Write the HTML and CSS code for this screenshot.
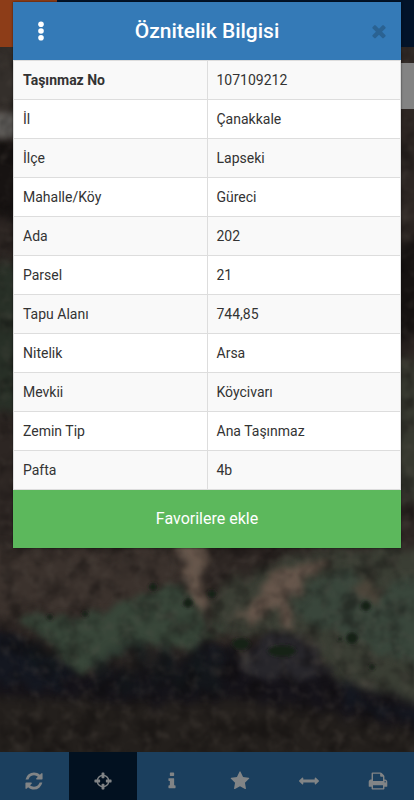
FILE: index.html
```html
<!DOCTYPE html>
<html lang="tr">
<head>
<meta charset="utf-8">
<meta name="viewport" content="width=device-width, initial-scale=1">
<title>Öznitelik Bilgisi</title>
<link rel="stylesheet" href="styles.css">
</head>
<body>
<header class="topbar"><div class="brand"></div></header>

<main class="map">
  <svg class="terrain" viewBox="0 47 414 706" preserveAspectRatio="xMidYMax slice" aria-hidden="true">
    <defs>
      <filter id="soft" x="-20%" y="-20%" width="140%" height="140%" color-interpolation-filters="sRGB">
        <feTurbulence type="fractalNoise" baseFrequency="0.07" numOctaves="4" seed="4" result="n"/>
        <feDisplacementMap in="SourceGraphic" in2="n" scale="22" xChannelSelector="R" yChannelSelector="G"/>
        <feGaussianBlur stdDeviation="3"/>
      </filter>
      <filter id="spot" x="-20%" y="-20%" width="140%" height="140%">
        <feGaussianBlur stdDeviation="1.500"/>
      </filter>
      <filter id="haze" x="-20%" y="-20%" width="140%" height="140%" color-interpolation-filters="sRGB">
        <feTurbulence type="fractalNoise" baseFrequency="0.1 0.03" numOctaves="3" seed="9" result="n"/>
        <feDisplacementMap in="SourceGraphic" in2="n" scale="26" xChannelSelector="R" yChannelSelector="G"/>
        <feGaussianBlur stdDeviation="5"/>
      </filter>
      <filter id="grain" x="0" y="0" width="100%" height="100%" color-interpolation-filters="sRGB">
        <feTurbulence type="fractalNoise" baseFrequency="0.05" numOctaves="4" seed="12"/>
        <feColorMatrix values="0 0 0 0 0.04  0 0 0 0 0.03  0 0 0 0 0.03  2.6 0 0 0 -1.1"/>
        <feGaussianBlur stdDeviation="1"/>
      </filter>
      <filter id="glint" x="0" y="0" width="100%" height="100%" color-interpolation-filters="sRGB">
        <feTurbulence type="fractalNoise" baseFrequency="0.09" numOctaves="4" seed="31"/>
        <feColorMatrix values="0 0 0 0 0.36  0 0 0 0 0.33  0 0 0 0 0.3  1.6 0 0 0 -0.75"/>
        <feGaussianBlur stdDeviation="1"/>
      </filter>
    </defs>
    <rect x="0" y="47" width="414" height="706" fill="#2d2623"/>
    <g filter="url(#haze)">
      <path fill="#342f2b" d="M-20 40H30V112H-20z"/>
      <path fill="#171312" d="M-20 142H30V222H-20zM390 240H434V340H390z"/>
      <path fill="#283027" d="M-20 265H30V415H-20z"/>
      <path fill="#373930" d="M390 360H434V505H390z"/>
      <path fill="#3b322d" d="M-20 550H180V600L100 620 20 612-20 620z"/>
      <path fill="#3a3e34" d="M205 600 300 550H434V720L350 690 300 640 215 636z"/>
      <path fill="#151319" d="M-20 628 20 636 50 660 90 674 150 668 220 650 300 656 350 686 434 708V780H-20z"/>
      <path fill="#231f1c" d="M-20 696 80 700 150 705 240 700 330 712 434 736V780H-20z"/>
    </g>
    <g filter="url(#soft)">
      <path fill="#5f5d5a" d="M-10 113H20V138H-10z"/>
      <path fill="#384639" d="M22 616 70 620 120 606 162 590 180 582 196 594 207 622 222 636 190 648 130 650 110 662 86 676 62 664 48 642 30 630z"/>
      <path fill="#39463b" d="M292 618 310 586 350 566 370 600 390 586 430 574V672L380 654 350 638z"/>
      <path fill="#66564b" d="M180 543H205L209 570 202 582 208 608 200 616 191 590 182 574zM234 620 262 594 268 574 300 562 328 566 306 582 288 602 298 630 286 634 278 608 252 624z"/>
      <path fill="#4c453a" d="M350 594 366 582 388 590 378 606z"/>
      <path fill="#27262b" d="M236 660 270 638 306 640 330 672 300 680 250 678z"/>
      <path fill="#181920" d="M194 654 214 644 230 654 226 672 200 674z"/>
      <path fill="#57514a" opacity=".7" d="M232 658 250 654 248 664zM358 678 372 684 372 692zM298 630 314 640 322 656z"/>
      <path fill="#141a25" opacity=".6" d="M-10 630 16 636 50 660 76 672 60 690-10 682zM338 680 370 704 424 710V724L350 706z"/>
    </g>
    <g filter="url(#haze)" opacity=".8" stroke="#12191c" stroke-width="7">
      <path d="M36 640V672M52 646V680M98 660V694M112 650V694M126 646V694M140 648V694M156 646V694M170 652V694M184 654V694M200 648V694M216 652V694"/>
    </g>
    <rect x="0" y="47" width="414" height="706" filter="url(#grain)" opacity=".4"/>
    <rect x="0" y="47" width="414" height="706" filter="url(#glint)" opacity=".4"/>
    <g fill="#192019" filter="url(#spot)">
      <circle cx="188" cy="604" r="5"/><circle cx="366" cy="607" r="5"/><circle cx="352" cy="639" r="6"/><ellipse cx="241" cy="645" rx="9" ry="6"/><circle cx="153" cy="588" r="4"/><circle cx="212" cy="595" r="4"/><circle cx="50" cy="618" r="3"/><circle cx="85" cy="615" r="3"/><circle cx="340" cy="640" r="2"/><circle cx="372" cy="668" r="3"/><ellipse cx="282" cy="652" rx="14" ry="6"/>
    </g>
  </svg>
  <div class="map-control"></div>
</main>

<nav class="toolbar" aria-label="Harita araçları">
  <button class="tool" type="button" aria-label="Yenile"><svg class="icon" viewBox="0 0 1792 1792"><path d="M1639 1056q0 5-1 7-64 268-268 434.500t-478 166.500q-146 0-282.500-55t-243.500-157l-129 129q-19 19-45 19t-45-19-19-45v-448q0-26 19-45t45-19h448q26 0 45 19t19 45-19 45l-137 137q71 66 161 102t187 36q134 0 250-65t186-179q11-17 53-117 8-23 30-23h192q13 0 22.500 9.500t9.500 22.500zm25-800v448q0 26-19 45t-45 19h-448q-26 0-45-19t-19-45 19-45l138-138q-148-137-349-137-134 0-250 65t-186 179q-11 17-53 117-8 23-30 23h-199q-13 0-22.500-9.500t-9.500-22.500v-7q65-268 270-434.500t480-166.500q146 0 284 55.500t245 156.500l130-129q19-19 45-19t45 19 19 45z"/></svg></button>
  <button class="tool tool-active" type="button" aria-label="Konum"><svg class="icon" viewBox="0 0 1792 1792"><path d="M1325 1024h-109q-26 0-45-19t-19-45v-128q0-26 19-45t45-19h109q-32-108-112.500-188.500t-188.500-112.500v109q0 26-19 45t-45 19h-128q-26 0-45-19t-19-45v-109q-108 32-188.500 112.500t-112.500 188.500h109q26 0 45 19t19 45v128q0 26-19 45t-45 19h-109q32 108 112.500 188.500t188.500 112.500v-109q0-26 19-45t45-19h128q26 0 45 19t19 45v109q108-32 188.500-112.500t112.500-188.500zm339-192v128q0 26-19 45t-45 19h-143q-37 161-154.500 278.500t-278.500 154.500v143q0 26-19 45t-45 19h-128q-26 0-45-19t-19-45v-143q-161-37-278.500-154.500t-154.500-278.500h-143q-26 0-45-19t-19-45v-128q0-26 19-45t45-19h143q37-161 154.500-278.500t278.500-154.500v-143q0-26 19-45t45-19h128q26 0 45 19t19 45v143q161 37 278.500 154.500t154.500 278.500h143q26 0 45 19t19 45z"/></svg></button>
  <button class="tool" type="button" aria-label="Bilgi"><svg class="icon" viewBox="0 0 1792 1792"><path d="M1216 1344v128q0 26-19 45t-45 19h-512q-26 0-45-19t-19-45v-128q0-26 19-45t45-19h64v-384h-64q-26 0-45-19t-19-45v-128q0-26 19-45t45-19h384q26 0 45 19t19 45v576h64q26 0 45 19t19 45zm-128-1152v192q0 26-19 45t-45 19h-256q-26 0-45-19t-19-45v-192q0-26 19-45t45-19h256q26 0 45 19t19 45z"/></svg></button>
  <button class="tool" type="button" aria-label="Favoriler"><svg class="icon" viewBox="0 0 1792 1792"><path d="M1728 647q0 22-26 48l-363 354 86 500q1 7 1 20 0 21-10.500 35.500t-30.500 14.500q-19 0-40-12l-449-236-449 236q-22 12-40 12-21 0-31.500-14.500t-10.500-35.500q0-6 2-20l86-500-364-354q-25-27-25-48 0-37 56-46l502-73 225-455q19-41 49-41t49 41l225 455 502 73q56 9 56 46z"/></svg></button>
  <button class="tool" type="button" aria-label="Ölç"><svg class="icon" viewBox="0 0 1792 1792"><path d="M1792 896q0 26-19 45l-256 256q-19 19-45 19t-45-19-19-45v-128h-1024v128q0 26-19 45t-45 19-45-19l-256-256q-19-19-19-45t19-45l256-256q19-19 45-19t45 19 19 45v128h1024v-128q0-26 19-45t45-19 45 19l256 256q19 19 19 45z"/></svg></button>
  <button class="tool" type="button" aria-label="Yazdır"><svg class="icon" viewBox="0 0 1792 1792"><path d="M448 1536h896v-256h-896v256zm0-640h896v-384h-160q-40 0-68-28t-28-68v-160h-640v640zm1152 64q0-26-19-45t-45-19-45 19-19 45 19 45 45 19 45-19 19-45zm128 0v416q0 13-9.500 22.500t-22.500 9.500h-224v160q0 40-28 68t-68 28h-960q-40 0-68-28t-28-68v-160h-224q-13 0-22.500-9.500t-9.500-22.500v-416q0-79 56.500-135.500t135.500-56.500h64v-544q0-40 28-68t68-28h672q40 0 88 20t76 48l152 152q28 28 48 76t20 88v256h64q79 0 135.500 56.500t56.500 135.500z"/></svg></button>
</nav>

<section class="dialog" role="dialog" aria-labelledby="dialog-title">
  <div class="dialog-head">
    <button class="head-btn" type="button" aria-label="Menü"><svg class="icon" viewBox="0 0 20 20"><circle cx="10" cy="3.200" r="2.800"/><circle cx="10" cy="10" r="2.800"/><circle cx="10" cy="16.800" r="2.800"/></svg></button>
    <h1 class="dialog-title" id="dialog-title">Öznitelik Bilgisi</h1>
    <button class="head-btn head-close" type="button" aria-label="Kapat"><svg class="icon" viewBox="0 0 1792 1792"><path d="M1490 1322q0 40-28 68l-136 136q-28 28-68 28t-68-28l-294-294-294 294q-28 28-68 28t-68-28l-136-136q-28-28-28-68t28-68l294-294-294-294q-28-28-28-68t28-68l136-136q28-28 68-28t68 28l294 294 294-294q28-28 68-28t68 28l136 136q28 28 28 68t-28 68l-294 294 294 294q28 28 28 68z"/></svg></button>
  </div>
  <table class="attrs">
    <tbody>
      <tr><th class="key" scope="row">Taşınmaz No</th><td>107109212</td></tr>
      <tr><th scope="row">İl</th><td>Çanakkale</td></tr>
      <tr><th scope="row">İlçe</th><td>Lapseki</td></tr>
      <tr><th scope="row">Mahalle/Köy</th><td>Güreci</td></tr>
      <tr><th scope="row">Ada</th><td>202</td></tr>
      <tr><th scope="row">Parsel</th><td>21</td></tr>
      <tr><th scope="row">Tapu Alanı</th><td>744,85</td></tr>
      <tr><th scope="row">Nitelik</th><td>Arsa</td></tr>
      <tr><th scope="row">Mevkii</th><td>Köycivarı</td></tr>
      <tr><th scope="row">Zemin Tip</th><td>Ana Taşınmaz</td></tr>
      <tr><th scope="row">Pafta</th><td>4b</td></tr>
    </tbody>
  </table>
  <button class="favorite" type="button">Favorilere ekle</button>
</section>
</body>
</html>
```
FILE: styles.css
```css
* { box-sizing: border-box; }

body {
  position: relative;
  display: flex;
  flex-direction: column;
  min-height: 100vh;
  margin: 0;
  background: #211d1b;
  color: #333;
  font-family: Roboto, "Liberation Sans", sans-serif;
  font-size: 14px;
  line-height: 20px;
}

button {
  padding: 0;
  border: 0;
  font: inherit;
  cursor: pointer;
}

.icon {
  display: block;
  width: 20px;
  height: 20px;
  fill: currentColor;
}

.topbar {
  display: flex;
  height: 47px;
  background: #021329;
}

.brand {
  width: 57px;
  background: #8d3d18;
}

.map {
  position: relative;
  flex: 1;
  overflow: hidden;
}

.terrain {
  position: absolute;
  inset: 0;
  width: 100%;
  height: 100%;
}

.map-control {
  position: absolute;
  top: 16px;
  right: 0;
  width: 46px;
  height: 46px;
  background: #838383;
}

.toolbar {
  display: grid;
  grid-template-columns: repeat(6, 1fr);
  height: 48px;
  padding-right: 2px;
  background: #1b3f5e;
}

.tool {
  display: flex;
  align-items: center;
  justify-content: center;
  padding-top: 10px;
  background: #1b3f5e;
  color: #818486;
}

.tool-active { background: #021120; }

.dialog {
  position: absolute;
  top: 2px;
  left: 13px;
  right: 13px;
  background: #fff;
  box-shadow: 0 0 2px rgba(0, 0, 0, 0.6);
}

.dialog-head {
  display: flex;
  align-items: center;
  height: 58px;
  padding: 0 12px;
  background: #347ab7;
}

.dialog-title {
  flex: 1;
  margin: 0;
  color: #fff;
  font-size: 21px;
  font-weight: 500;
  line-height: 24px;
  text-align: center;
}

.head-btn {
  display: flex;
  align-items: center;
  justify-content: center;
  width: 32px;
  height: 32px;
  background: none;
  color: #fff;
}

.head-close {
  justify-content: flex-end;
  color: #2a6292;
}

.attrs {
  width: 100%;
  border-collapse: collapse;
  table-layout: fixed;
}

.attrs th,
.attrs td {
  height: 39px;
  padding: 9px;
  border: 1px solid #ddd;
  font-weight: 400;
  text-align: left;
}

.attrs .key { font-weight: 700; }

.attrs tr:nth-child(odd) { background: #f9f9f9; }

.favorite {
  display: block;
  width: 100%;
  height: 58px;
  background: #5cb85c;
  color: #fff;
  font-size: 16px;
}
```
